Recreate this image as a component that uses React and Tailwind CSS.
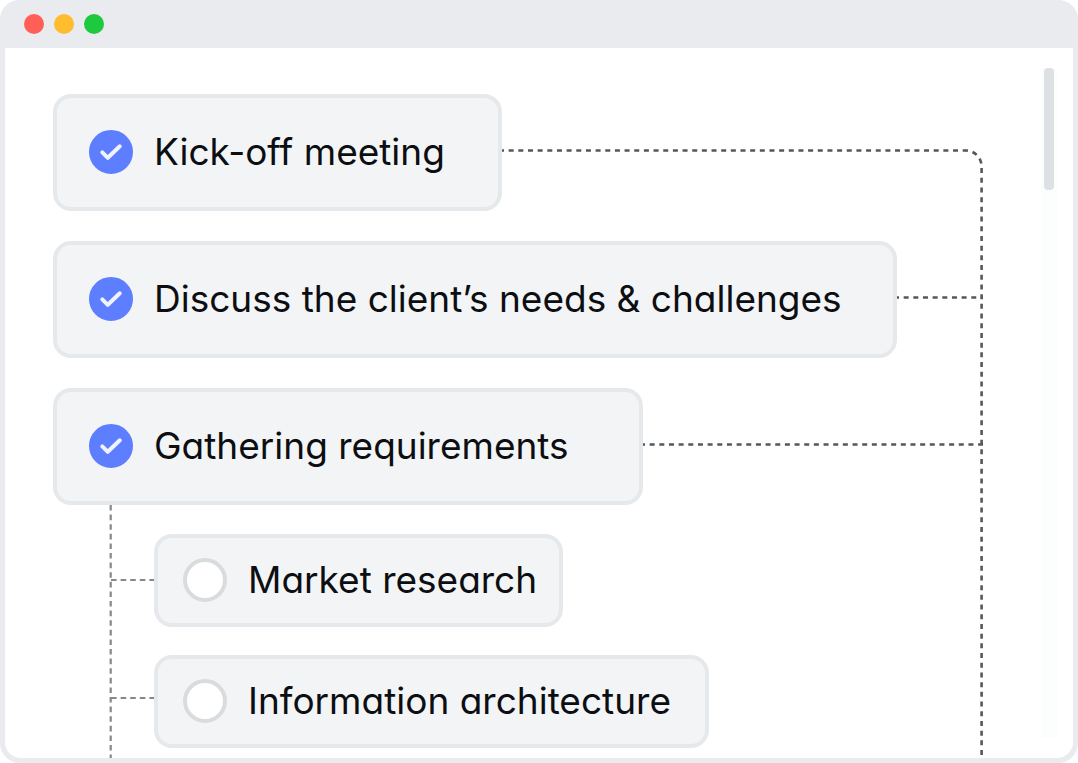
import React, { useState } from 'react';
import clsx from 'clsx';

const initialTasks = [
  { id: 'kickoff', title: 'Kick-off meeting', done: true, width: 'min-w-[449px]' },
  { id: 'needs', title: 'Discuss the client’s needs & challenges', done: true, width: 'min-w-[844px]' },
  { id: 'requirements', title: 'Gathering requirements', done: true, width: 'min-w-[590px]' },
];

const initialSubtasks = [
  { id: 'market', title: 'Market research', done: false, width: 'min-w-[409px]' },
  { id: 'architecture', title: 'Information architecture', done: false, width: 'min-w-[555px]' },
];

const TitleBar = () => (
  <header className="flex h-12 items-center gap-[10px] bg-[#e9ebee] px-6">
    <span className="h-5 w-5 rounded-full bg-[#ff5f57]"></span>
    <span className="h-5 w-5 rounded-full bg-[#febc2e]"></span>
    <span className="h-5 w-5 rounded-full bg-[#1fc93f]"></span>
  </header>
);

const TaskCard = ({ task, nested, onToggle }) => (
  <label
    htmlFor={task.id}
    className={clsx(
      'flex shrink-0 cursor-pointer items-center gap-[21px] rounded-[18px] border-4 border-[#e6e9eb] bg-[#f2f4f6] pb-0.5',
      nested ? 'h-[93px] pl-[25px]' : 'h-[117px] pl-8',
      task.width
    )}
  >
    <span className="relative h-11 w-11 shrink-0">
      <input
        id={task.id}
        type="checkbox"
        checked={task.done}
        onChange={() => onToggle(task.id)}
        className="block h-11 w-11 cursor-pointer appearance-none rounded-full border-4 border-[#d9dcde] bg-white checked:border-[#5c7eff] checked:bg-[#5c7eff]"
      />
      {task.done && (
        <svg viewBox="0 0 44 44" className="pointer-events-none absolute inset-0 h-11 w-11" fill="none">
          <path
            d="M13.3 22.3 L18.8 27.8 L30.8 16.3"
            stroke="#f0f3fc"
            strokeWidth="4"
            strokeLinecap="round"
            strokeLinejoin="round"
          />
        </svg>
      )}
    </span>
    <span className="text-[37px] leading-[48px] whitespace-nowrap text-[#0c0e12] [font-feature-settings:'cv11']">
      {task.title}
    </span>
  </label>
);

// Dashed line from a card to the trunk on the right
const Connector = () => (
  <svg className="mb-1 h-[3px] min-w-0 flex-1" aria-hidden="true">
    <line x1="0" y1="1.5" x2="100%" y2="1.5" stroke="#55575a" strokeWidth="2.4" strokeDasharray="5 4.66" strokeDashoffset="3" />
  </svg>
);

// Vertical line that joins all of the top level tasks
const Trunk = () => (
  <svg className="absolute top-[101px] right-0 h-[calc(100%-101px)] w-5" aria-hidden="true">
    <path d="M0 1.5 H2 A16 16 0 0 1 18.6 18 V2000" fill="none" stroke="#55575a" strokeWidth="2.6" strokeDasharray="5 4.7" />
  </svg>
);

const SubtaskBranch = () => (
  <svg className="w-[45px] shrink-0 self-stretch" fill="none" stroke="#86888a" strokeWidth="2.2" strokeDasharray="5.6 4" aria-hidden="true">
    <path d="M1.7 0 V2000" />
    <path d="M2 75 H45" />
    <path d="M2 193 H45" />
  </svg>
);

const Scrollbar = () => (
  <div className="mt-5 mr-4 mb-5 w-4 shrink-0 bg-[#fcfdfd] px-[3px]">
    <div className="h-[122px] rounded-[4px] bg-[#dde1e4]"></div>
  </div>
);

const App = () => {
  const [tasks, setTasks] = useState(initialTasks);
  const [subtasks, setSubtasks] = useState(initialSubtasks);

  const toggle = (setList) => (id) => {
    setList((list) => list.map((task) => (task.id === id ? { ...task, done: !task.done } : task)));
  };

  return (
    <div className="flex min-h-screen flex-col overflow-hidden rounded-[20px] bg-[#e9ebee] font-['Inter','Liberation_Sans',sans-serif]">
      <TitleBar />

      <main className="mx-[5px] mb-[5px] flex flex-1 overflow-hidden rounded-b-[16px] bg-white">
        <div className="relative mr-[58px] ml-12 flex min-w-0 flex-1 flex-col pt-[46px]">
          <ul className="space-y-[30px]">
            {tasks.map((task, index) => (
              <li key={task.id} className={clsx('flex items-center', index === 0 && 'pr-5')}>
                <TaskCard task={task} onToggle={toggle(setTasks)} />
                <Connector />
              </li>
            ))}
          </ul>

          <div className="ml-14 flex flex-1">
            <SubtaskBranch />
            <ul className="space-y-7 pt-[29px] pb-[10px]">
              {subtasks.map((task) => (
                <li key={task.id} className="flex">
                  <TaskCard task={task} nested onToggle={toggle(setSubtasks)} />
                </li>
              ))}
            </ul>
          </div>

          <Trunk />
        </div>

        <Scrollbar />
      </main>
    </div>
  );
};

export default App;
